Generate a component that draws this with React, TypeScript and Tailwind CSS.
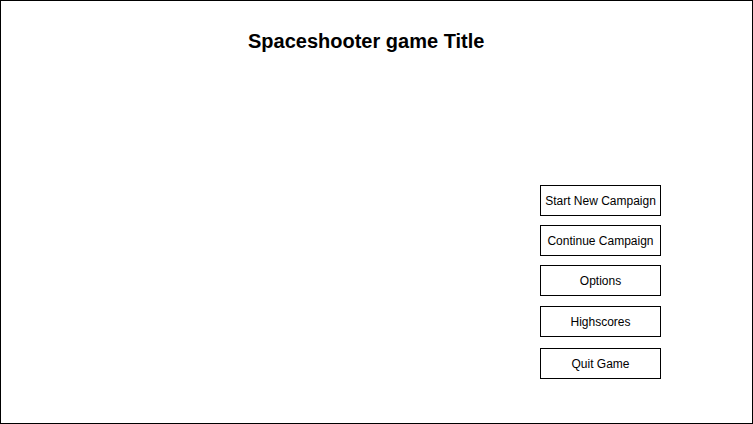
const buttons = [
  { label: "Start New Campaign", mt: "mt-0" },
  { label: "Continue Campaign", mt: "mt-[9px]" },
  { label: "Options", mt: "mt-[9px]" },
  { label: "Highscores", mt: "mt-[10px]" },
  { label: "Quit Game", mt: "mt-[11px]" },
];

export default function App() {
  return (
    <div
      className="w-[753px] h-[424px] border border-black bg-white text-black overflow-hidden"
      style={{ fontFamily: '"Liberation Sans", Arial, sans-serif' }}
    >
      {/* Title */}
      <h1 className="mt-[28px] ml-[247px] text-[20px] leading-6 font-bold">
        Spaceshooter game Title
      </h1>

      {/* Menu */}
      <div className="mt-[132px] ml-[539px] flex flex-col w-[121px]">
        {buttons.map((b) => (
          <button
            key={b.label}
            className={`${b.mt} h-[31px] border border-black bg-white flex items-center justify-center text-[12px] leading-none`}
          >
            {b.label}
          </button>
        ))}
      </div>
    </div>
  );
}
